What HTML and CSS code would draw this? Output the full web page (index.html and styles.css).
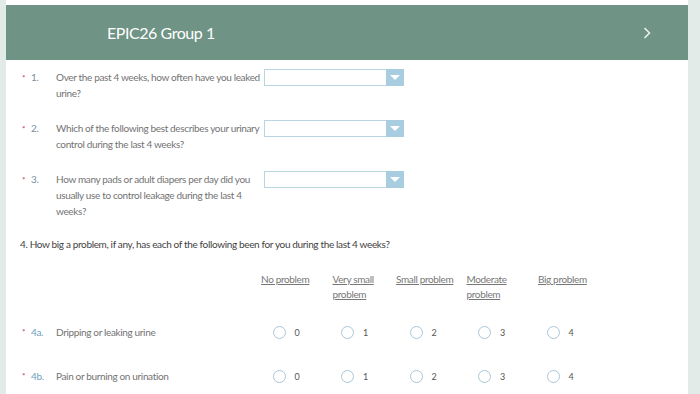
FILE: index.html
```html
<!DOCTYPE html>
<html lang="en">
<head>
  <meta charset="UTF-8">
  <title>EPIC26 Group 1</title>
  <link rel="stylesheet" href="styles.css">
</head>
<body>

<div class="panel">
  <div class="header">
    <h1>EPIC26 Group 1</h1>
    <svg class="next" width="10" height="14" viewBox="0 0 10 14"><path d="M2.5 2 L7.5 7 L2.5 12" fill="none" stroke="#e8f2ee" stroke-width="1.6"/></svg>
  </div>

  <div class="questions">
    <div class="q">
      <span class="req">*</span>
      <span class="num">1.</span>
      <span class="text">Over the past 4 weeks, how often have you leaked urine?</span>
      <div class="select"><span class="arrow"></span></div>
    </div>
    <div class="q">
      <span class="req">*</span>
      <span class="num">2.</span>
      <span class="text">Which of the following best describes your urinary control during the last 4 weeks?</span>
      <div class="select"><span class="arrow"></span></div>
    </div>
    <div class="q">
      <span class="req">*</span>
      <span class="num">3.</span>
      <span class="text">How many pads or adult diapers per day did you usually use to control leakage during the last 4 weeks?</span>
      <div class="select"><span class="arrow"></span></div>
    </div>

    <p class="heading">4. How big a problem, if any, has each of the following been for you during the last 4 weeks?</p>

    <div class="matrix-head">
      <span class="col">No problem</span>
      <span class="col c2">Very small problem</span>
      <span class="col c3">Small problem</span>
      <span class="col">Moderate problem</span>
      <span class="col c5">Big problem</span>
    </div>

    <div class="m-row">
      <span class="req">*</span>
      <span class="num sub">4a.</span>
      <span class="m-text">Dripping or leaking urine</span>
      <label class="opt"><span class="radio"></span>0</label>
      <label class="opt"><span class="radio"></span>1</label>
      <label class="opt"><span class="radio"></span>2</label>
      <label class="opt"><span class="radio"></span>3</label>
      <label class="opt"><span class="radio"></span>4</label>
    </div>
    <div class="m-row">
      <span class="req">*</span>
      <span class="num sub">4b.</span>
      <span class="m-text">Pain or burning on urination</span>
      <label class="opt"><span class="radio"></span>0</label>
      <label class="opt"><span class="radio"></span>1</label>
      <label class="opt"><span class="radio"></span>2</label>
      <label class="opt"><span class="radio"></span>3</label>
      <label class="opt"><span class="radio"></span>4</label>
    </div>
  </div>
</div>

</body>
</html>
```

FILE: styles.css
```css
body { margin: 0; background: #e2ebe8; font-family: Lato, "Open Sans", sans-serif; color: #737373; font-size: 10px; letter-spacing: -0.35px; height: 394px; overflow: hidden; }
.panel { margin-left: 6px; width: 682px; min-height: 394px; background: #fff; padding-top: 5px; box-sizing: border-box; }
.header { height: 55px; background: #6f9384; display: flex; align-items: center; padding: 0 36px 0 101px; }
.header h1 { flex: 1; margin: 0; font-size: 16px; font-weight: normal; color: #fff; letter-spacing: -0.45px; }
.questions { padding: 9px 0 0 16px; }
.q { display: flex; align-items: flex-start; line-height: 16px; margin-bottom: 19px; }
.req { width: 9px; color: #c23a5c; font-size: 8px; padding-top: 2px; line-height: 14px; }
.num { width: 25px; color: #7c8f9c; }
.num.sub { color: #6fa0bd; }
.text { width: 204px; margin-right: 4px; }
.select { width: 140px; height: 17px; border: 1px solid #b8d5e1; box-sizing: border-box; position: relative; }
.select .arrow { position: absolute; right: -1px; top: -1px; width: 18px; height: 17px; background: #a8cde0; }
.select .arrow::after { content: ""; position: absolute; left: 4px; top: 6px; border-left: 5px solid transparent; border-right: 5px solid transparent; border-top: 5px solid #fff; }
.heading { margin: -2px 0 0 -2px; color: #3f3f3f; line-height: 16px; }
.matrix-head { display: flex; padding-left: 239px; margin-top: 20px; line-height: 15px; }
.col { width: 68.5px; text-decoration: underline; color: #777; box-sizing: border-box; padding-right: 8px; }
.c2 { padding-left: 3px; }
.c3 { margin-left: -2px; padding-right: 0; width: 70.5px; }
.c5 { padding-left: 3px; }
.matrix-head + .m-row { margin-top: 22px; }
.m-row { display: flex; align-items: center; height: 16px; margin-bottom: 28px; }
.m-row .req { padding-top: 0; }
.m-text { width: 207px; }
.opt { width: 68.5px; display: flex; align-items: center; color: #555; font-size: 9px; }
.radio { width: 13px; height: 13px; border: 1px solid #a9c7d7; border-radius: 50%; box-sizing: border-box; margin: 0 9px 0 9.5px; }
```
